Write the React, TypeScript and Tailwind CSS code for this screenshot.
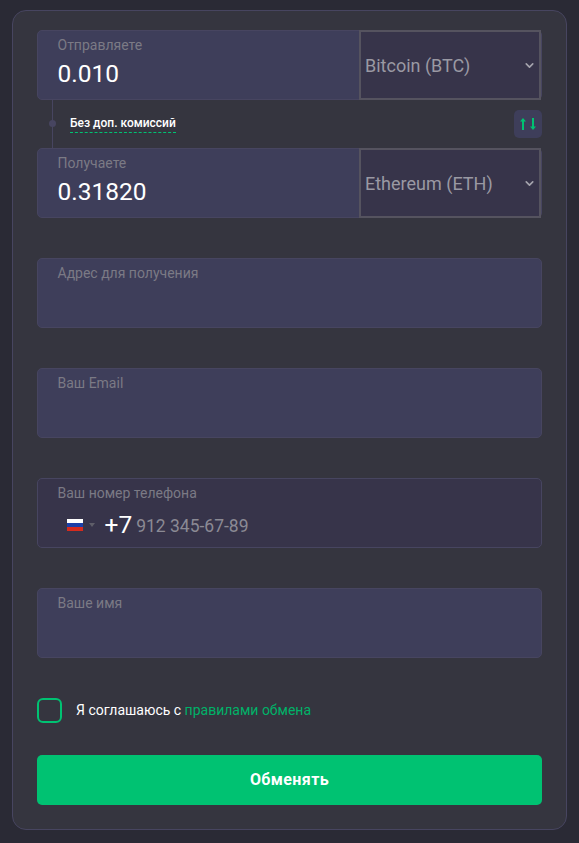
import { ChevronDown } from "lucide-react";

function AmountField({ label, value, coin }: { label: string; value: string; coin: string }) {
  return (
    <div className="flex h-[70px] rounded-[5px] border border-[#474560] bg-[#3e3e5a]">
      <div className="flex-1 pl-[19.5px] pt-[5px]">
        <div className="text-[14px] leading-[18px] text-[#7b7a85]">{label}</div>
        <div className="mt-[4px] text-[24.5px] leading-[32px] text-white">{value}</div>
      </div>
      <div className="-my-px flex h-[70px] w-[182px] items-center justify-between border-2 border-[#55535f] bg-[#37344a] pl-[4px] pr-[3px]">
        <span className="text-[18px] text-[#9a99a3]">{coin}</span>
        <ChevronDown size={13} strokeWidth={3} className="text-[#a5a4ad]" />
      </div>
    </div>
  );
}

function TextField({ label }: { label: string }) {
  return (
    <div className="mt-10 h-[70px] rounded-[5px] border border-[#474560] bg-[#3e3e5a] pl-[19.5px] pt-[5px]">
      <div className="text-[14px] leading-[18px] text-[#7b7a85]">{label}</div>
    </div>
  );
}

function SwapIcon() {
  return (
    <svg width="16" height="12" viewBox="0 0 16 12" fill="#00c272" stroke="none">
      <path d="M2 12V3.5H0L3 0 6 3.5H4V12z" />
      <path d="M12 0v8.5h-2L13 12l3-3.5h-2V0z" />
    </svg>
  );
}

export default function App() {
  return (
    <div className="min-h-[843px] bg-[#2a2a35] px-3 pt-[10px] font-['Roboto',sans-serif]">
      <div className="h-[820px] rounded-[14px] border border-[#474560] bg-[#35353f] px-6 pt-[19px]">
        <AmountField label="Отправляете" value="0.010" coin="Bitcoin (BTC)" />

        <div className="flex h-[48px] items-center justify-between">
          <div className="flex h-full items-start">
            <div className="relative ml-[15px] h-full w-px bg-[#474560]">
              <div className="absolute left-[-3px] top-[20px] h-[7px] w-[7px] rounded-full bg-[#474560]" />
            </div>
            <span className="ml-[17px] mt-[16px] border-b border-dashed border-[#00c272] pb-[1px] text-[12px] font-medium leading-[15px] text-white">
              Без доп. комиссий
            </span>
          </div>
          <div className="flex h-7 w-7 items-center justify-center rounded-[5px] bg-[#3e3e5a]">
            <SwapIcon />
          </div>
        </div>

        <AmountField label="Получаете" value="0.31820" coin="Ethereum (ETH)" />
        <TextField label="Адрес для получения" />
        <TextField label="Ваш Email" />

        <div className="mt-10 h-[70px] rounded-[5px] border border-[#474560] bg-[#37344a] pl-[19.5px] pt-[5px]">
          <div className="text-[14px] leading-[18px] text-[#7b7a85]">Ваш номер телефона</div>
          <div className="mt-[6px] flex items-center">
            <div className="ml-[9px] flex h-[12px] w-4 flex-col">
              <div className="h-1 bg-white" />
              <div className="h-1 bg-[#1c3fa8]" />
              <div className="h-1 bg-[#d52b1e]" />
            </div>
            <div className="ml-[6px] h-0 w-0 border-x-[3px] border-t-[4px] border-x-transparent border-t-[#5f5e69]" />
            <span className="ml-[10px] text-[24.5px] leading-[32px] text-white">+7</span>
            <span className="ml-[4px] mt-[2px] text-[17.5px] leading-[32px] text-[#8b8a94]">912 345-67-89</span>
          </div>
        </div>

        <TextField label="Ваше имя" />

        <div className="mt-10 flex items-center">
          <div className="h-[25px] w-[25px] rounded-[6px] border-2 border-[#00c272]" />
          <span className="ml-[14px] text-[14px] text-white">
            Я соглашаюсь с <span className="text-[#00b268]">правилами обмена</span>
          </span>
        </div>

        <button className="mt-8 h-[50px] w-full rounded-[5px] bg-[#00c272] text-[16px] font-bold tracking-[0.4px] text-white">
          Обменять
        </button>
      </div>
    </div>
  );
}
